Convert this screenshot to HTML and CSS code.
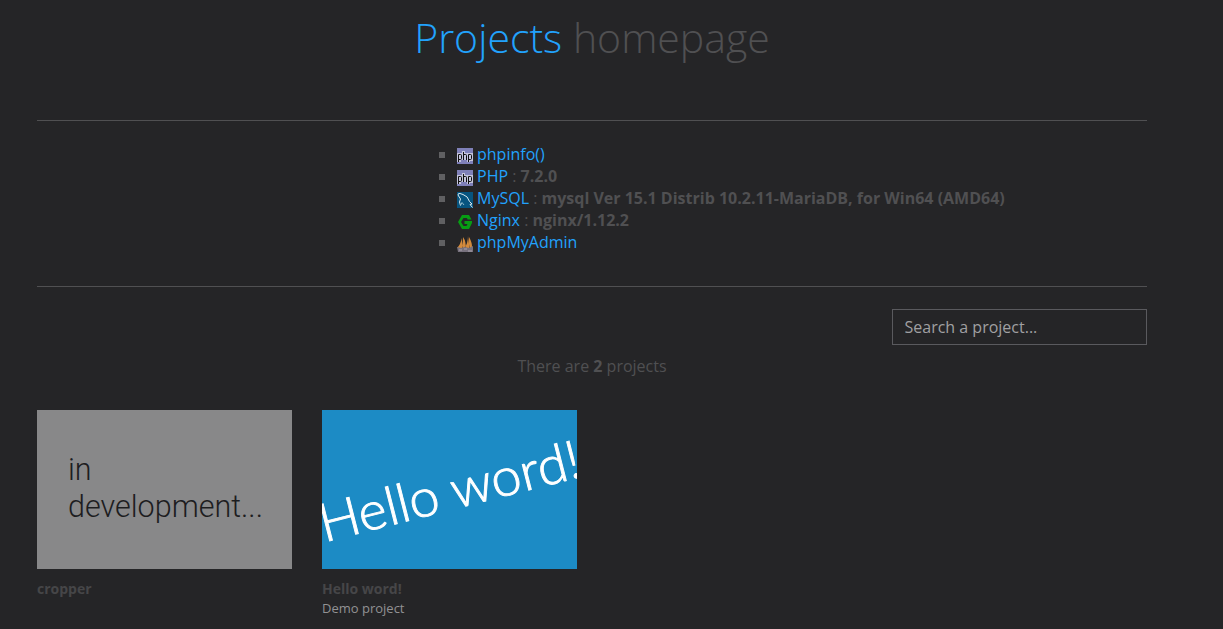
FILE: index.html
```html
<!DOCTYPE html>
<html lang="en">
<head>
<meta charset="utf-8">
<title>Projects homepage</title>
<link rel="stylesheet" href="styles.css">
</head>
<body>
<main class="container">
  <header class="header">
    <h1 class="title"><a href="#">Projects</a> homepage</h1>
  </header>
  <section class="tools">
    <ul class="tool-list">
      <li><svg class="icon" viewBox="0 0 16 16"><rect width="16" height="16" fill="#7f80b8"/><path d="M0 5h5V3h3v2h8v8h-3v1h-3v-2H4v2H0z" fill="#c4c4dc"/><path d="M1.500 14V6.500h2q1 0 1 1v3q0 1-1 1h-2M6.500 4v8M6.500 6.500h2q1 0 1 1V12M11.500 14V6.500h2q1 0 1 1v3q0 1-1 1h-2" fill="none" stroke="#111"/></svg><a href="#">phpinfo()</a></li>
      <li><svg class="icon" viewBox="0 0 16 16"><rect width="16" height="16" fill="#7f80b8"/><path d="M0 5h5V3h3v2h8v8h-3v1h-3v-2H4v2H0z" fill="#c4c4dc"/><path d="M1.500 14V6.500h2q1 0 1 1v3q0 1-1 1h-2M6.500 4v8M6.500 6.500h2q1 0 1 1V12M11.500 14V6.500h2q1 0 1 1v3q0 1-1 1h-2" fill="none" stroke="#111"/></svg><a href="#">PHP</a> : <b>7.2.0</b></li>
      <li><svg class="icon" viewBox="0 0 16 16"><rect width="16" height="16" fill="#07547f"/><path d="M3.500 13.500L2.500 10 3.500 7 1 3Q1 1 3 1.500L6 2.500Q11 4 12.500 9.500L15 12 13 12.500 15.500 15.500" fill="none" stroke="#d9e8ee" stroke-width="1"/><path d="M3.500 13.500L5 10.500 7 13" fill="none" stroke="#8db9ca"/></svg><a href="#">MySQL</a> : <b>mysql Ver 15.1 Distrib 10.2.11-MariaDB, for Win64 (AMD64)</b></li>
      <li><svg class="icon" viewBox="0 0 16 16"><path d="M5 1h7l2.500 4.500h-4L10 4H6.500L4 8l2.500 4H9.500l1-2H7.500V7H15v2l-3 6H5L1 8z" fill="#079d13"/></svg><a href="#">Nginx</a> : <b>nginx/1.12.2</b></li>
      <li><svg class="icon" viewBox="0 0 16 16"><path d="M4.500 2Q4 8 0 12H6ZM6 1Q9.500 6 8.500 12H5.500ZM11 0Q11 7 7.500 12H12.500ZM12 1Q15.500 7 15 12H12Z" fill="#d38a3c"/><path d="M0 11l4 1 4-1 4 1 4-2v6H1z" fill="#77717d"/><path d="M2 14h3M7 13h3M11 15h4" stroke="#aaa2ac"/></svg><a href="#">phpMyAdmin</a></li>
    </ul>
  </section>
  <div class="search-row"><input class="search" type="text" placeholder="Search a project..."></div>
  <p class="count">There are <b>2</b> projects</p>
  <section class="projects">
    <article class="project">
      <div class="thumb thumb-dev"><span class="dev-text">in<br>development...</span></div>
      <h2>cropper</h2>
    </article>
    <article class="project">
      <div class="thumb thumb-hello"><svg viewBox="0 0 255 159"><text class="hello-text" transform="translate(7.500 131) rotate(-14.300)" x="-5.500" y="0" textLength="268" lengthAdjust="spacingAndGlyphs">Hello word!</text></svg></div>
      <h2>Hello word!</h2>
      <p>Demo project</p>
    </article>
  </section>
</main>
</body>
</html>
```
FILE: styles.css
```css
* { box-sizing: border-box; }
body {
  margin: 0;
  height: 629px;
  overflow: hidden;
  background: #252527;
  color: #505052;
  font: 16px/22px "Open Sans", sans-serif;
}
a { color: #22a2fc; text-decoration: none; }
.container { width: 1110px; margin-left: 37px; }
.header { height: 121px; border-bottom: 1px solid #505052; }
.title {
  margin: 0;
  padding-top: 9px;
  font-size: 41px;
  line-height: 57px;
  font-weight: 300;
  text-align: center;
}
.tools { height: 166px; padding-top: 22px; border-bottom: 1px solid #505052; }
.tool-list { margin: 0 0 0 402px; padding: 0; list-style: none; }
.tool-list li { height: 22px; white-space: nowrap; }
.tool-list li::before {
  content: "";
  display: inline-block;
  width: 6px;
  height: 6px;
  margin-right: 12px;
  background: #606062;
  vertical-align: 2px;
}
.icon { width: 16px; height: 16px; margin-right: 4px; vertical-align: -4px; }
.search-row { display: flex; justify-content: flex-end; padding-top: 22px; }
.search {
  width: 255px;
  height: 36px;
  padding: 0 11.500px;
  border: 1px solid #5a5a5e;
  border-radius: 0;
  background: transparent;
  color: #a0a0a2;
  font: 16px "Open Sans", sans-serif;
}
.search::placeholder { color: #a0a0a2; opacity: 1; }
.count { margin: 10px 0 33px; text-align: center; }
.projects { display: flex; gap: 30px; }
.project { width: 255px; }
.thumb { height: 159px; overflow: hidden; }
.thumb svg { display: block; width: 255px; height: 159px; }
.thumb-dev { padding: 41px 0 0 31px; background: #888889; color: #1d1d1f; }
.dev-text { display: block; font: 300 30.500px/37px Roboto, sans-serif; white-space: nowrap; }
.thumb-hello { background: #1c8bc5; }
.hello-text { font: 300 53px Lato, sans-serif; fill: #fff; stroke: #fff; stroke-width: .9px; }
.project h2 { margin: 10px 0 0; font-size: 14px; line-height: 20px; font-weight: 700; color: #464648; }
.project p { margin: 0; font-size: 13px; line-height: 19px; color: #929294; }
```
